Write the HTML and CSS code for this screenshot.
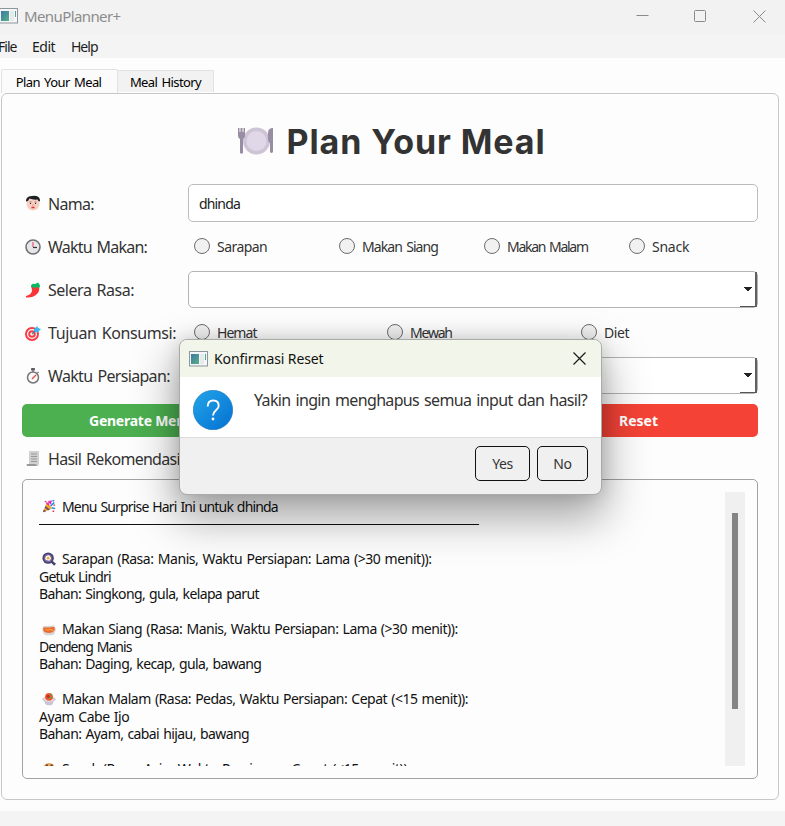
FILE: index.html
```html
<!DOCTYPE html>
<html lang="id">
<head>
<meta charset="utf-8">
<title>MenuPlanner+</title>
<link rel="stylesheet" href="styles.css">
</head>
<body>
<svg width="0" height="0" class="defs">
  <defs>
    <linearGradient id="teal" x1="0" y1="0" x2="1" y2="1"><stop offset="0" stop-color="#3b78a8"/><stop offset="1" stop-color="#58b184"/></linearGradient>
    <linearGradient id="blue" x1="0" y1="0" x2="1" y2="1"><stop offset="0" stop-color="#23a5e8"/><stop offset="1" stop-color="#0470d2"/></linearGradient>
    <symbol id="app" viewBox="0 0 19 16"><rect x=".5" y=".5" width="18" height="14.5" fill="#f4f6f8" stroke="#8d959d"/><rect x="2" y="3" width="8" height="10" fill="url(#teal)"/><rect x="11" y="3" width="4" height="10" fill="#e6eaef"/><path d="M16.500 3v6" stroke="#55a884"/></symbol>
  </defs>
</svg>
<div class="window">
  <header class="titlebar">
    <svg class="app-icon" width="19" height="16"><use href="#app"/></svg>
    <span class="app-name">MenuPlanner+</span>
    <svg class="controls" width="130" height="14" viewBox="0 0 130 14" fill="none" stroke="#8a8a8a"><path d="M.500 6.500h12"/><rect x="58.500" y="1.500" width="11" height="11" rx="1"/><path d="M117.500 1.500l12 12M129.500 1.500l-12 12"/></svg>
  </header>
  <nav class="menubar"><span class="m-file">File</span><span class="m-edit">Edit</span><span class="m-help">Help</span></nav>
  <div class="tabs"><div class="tab active">Plan Your Meal</div><div class="tab">Meal History</div></div>
  <main class="panel">
    <h1 class="title">
      <svg width="36" height="28" viewBox="0 0 36 28"><circle cx="18.500" cy="14" r="13.500" fill="#cdc4d6"/><circle cx="18.500" cy="14" r="10" fill="#e0d7e9"/><path d="M0 1h1.500v4h1V1h2v4h1V1H7v8q0 2-2 3v14q-1.500 1.500-3 0V12Q0 11 0 9z" fill="#998da3"/><path d="M35 1v24q-1.500 2-3 0v-9q-2-1-2-4V6q0-5 5-5z" fill="#998da3"/></svg>
      <span>Plan Your Meal</span>
    </h1>
    <div class="form">
      <div class="label"><svg class="ico" viewBox="0 0 16 16"><ellipse cx="8" cy="8.800" rx="6.500" ry="6.700" fill="#f6cfc0"/><path d="M1 6.500V5q1-4 6-4 7-1 8 4v1.500L13.500 6l-1-1.500Q8 5 4.500 3.500L3 6z" fill="#1d2023"/><path d="M4.500 7h2M9.500 7h2" stroke="#766" stroke-width=".8"/><path d="M5.500 8v1M10.500 8v1" stroke="#322" stroke-width="1"/><path d="M6.500 12.500h3" stroke="#e02a3c" stroke-width="1.500"/><path d="M8 9v2" stroke="#dda087"/></svg><span class="l1">Nama:</span></div>
      <div class="input">dhinda</div>
      <div class="label"><svg class="ico" viewBox="0 0 16 16"><circle cx="8" cy="8" r="7" fill="#e6e5e8" stroke="#716f73" stroke-width="1.600"/><path d="M8 3v5" stroke="#e57389" stroke-width="1.500"/><path d="M8 8.500h4" stroke="#333" stroke-width="1.200"/></svg><span class="l2">Waktu Makan:</span></div>
      <div class="radios four"><div class="radio r1"><i></i>Sarapan</div><div class="radio r2"><i></i>Makan Siang</div><div class="radio r3"><i></i>Makan Malam</div><div class="radio r4"><i></i>Snack</div></div>
      <div class="label"><svg class="ico" viewBox="0 0 16 16"><path d="M6 4q1-1 4-1l4 2q1 4-2 7-4 4-11 3.500v-1.500q5-1 6-5 0-2-1-5z" fill="#fa3437"/><path d="M6 5q0-4 4-3l2-1q2-1 2 1 2 2 0 4l-3-1-2 2-1-2z" fill="#08ba62"/></svg><span class="l3">Selera Rasa:</span></div>
      <div class="select"></div>
      <div class="label"><svg class="ico" viewBox="0 0 16 16"><circle cx="7" cy="9" r="6" fill="#fff" stroke="#f63c45" stroke-width="2"/><circle cx="7" cy="9" r="2.800" fill="#fff" stroke="#f63c45" stroke-width="2"/><path d="M7 9l6-6" stroke="#4c7f9c" stroke-width="1.400"/><path d="M9 4.500L12 1l1 2 3 1-3.500 3.500L10 7z" fill="#38b7f5"/></svg><span class="l4">Tujuan Konsumsi:</span></div>
      <div class="radios three"><div class="radio r5"><i></i>Hemat</div><div class="radio r6"><i></i>Mewah</div><div class="radio r7"><i></i>Diet</div></div>
      <div class="label"><svg class="ico" viewBox="0 0 16 16"><circle cx="8" cy="9.500" r="5.500" fill="#fafafa" stroke="#77757a" stroke-width="1.500"/><rect x="6" y="0" width="4" height="2.500" rx=".8" fill="#5e5b61"/><path d="M8 2v2M12.500 4l1 1" stroke="#77757a" stroke-width="1.500"/><path d="M7 11l4-4" stroke="#e84848" stroke-width="1.300"/></svg><span class="l5">Waktu Persiapan:</span></div>
      <div class="select"></div>
    </div>
    <div class="actions"><div class="btn green"><span>Generate Menu</span></div><div class="btn red"><span>Reset</span></div></div>
    <div class="label result-label"><svg class="ico" viewBox="0 0 16 16"><path d="M4 0h10v13q0 2-2 2H3q-2 0-1-2h2z" fill="#d0d0d0"/><path d="M6 3h6M6 5.500h6M6 8h6M6 10.500h6" stroke="#999"/><path d="M2 13h9q0 2 2 2H3q-2 0-1-2z" fill="#989898"/></svg><span class="l6">Hasil Rekomendasi</span></div>
    <section class="results">
      <div class="text">
        <div class="line t1"><svg class="em" viewBox="0 0 16 16"><path d="M1 15L5 5q5 1 6 6z" fill="#f4a82b"/><path d="M1 15l1-3 3 2M4 8l5 4-2 1-4-3z" fill="#724b70"/><path d="M5 4l3 3M8 2v3M11 2q-2 1-1 4" stroke="#d82fb4" stroke-width="1.700" fill="none"/><path d="M10 8l4-4M12 2h2M11 10l4 1" stroke="#198de1" stroke-width="1.700"/><path d="M3 3h2M13 7h2M12 14h2" stroke="#f03b58" stroke-width="1.700"/></svg><span>Menu Surprise Hari Ini untuk dhinda</span></div>
        <div class="line rule"></div>
        <div class="line"></div>
        <div class="line t2"><svg class="em" viewBox="0 0 16 16"><path d="M11 11l4 3.500" stroke="#4a4172" stroke-width="3"/><circle cx="7" cy="7" r="6.500" fill="#4a4172"/><circle cx="7" cy="7" r="4.500" fill="#766c9d"/><path d="M3.500 7q1-4 5-3l2 3-2 3-4-1z" fill="#fff"/><circle cx="7" cy="7" r="1.700" fill="#f9a931"/></svg><span>Sarapan (Rasa: Manis, Waktu Persiapan: Lama (&gt;30 menit)):</span></div>
        <div class="line t3">Getuk Lindri</div>
        <div class="line t4">Bahan: Singkong, gula, kelapa parut</div>
        <div class="line"></div>
        <div class="line t5"><svg class="em" viewBox="0 0 16 16"><path d="M0 7h16q-1 8-5 8H5Q1 15 0 7z" fill="#d8d5d8"/><path d="M1.500 5.500h13v4q-2 3-6 3-6 0-7-3z" fill="#ed6b28"/><path d="M4 8.500l3 1 2-1 4 1" stroke="#f9b36b" fill="none"/><path d="M2 5.500h7l5-1" stroke="#cfcfcf" stroke-width="1.500" fill="none"/></svg><span>Makan Siang (Rasa: Manis, Waktu Persiapan: Lama (&gt;30 menit)):</span></div>
        <div class="line t6">Dendeng Manis</div>
        <div class="line t7">Bahan: Daging, kecap, gula, bawang</div>
        <div class="line"></div>
        <div class="line t8"><svg class="em" viewBox="0 0 16 16"><path d="M0 8l4-3h8l4 3-3 3q-1 4-3 4H6q-3-1-3-4z" fill="#cbc3d7"/><path d="M2 8q3-2 12 0-2 3-6 3T2 8z" fill="#f1e6ee"/><circle cx="8" cy="5.500" r="4.500" fill="#f15b2a"/><circle cx="7" cy="5" r="1.800" fill="#ba3026"/><path d="M8 7l3-1M9 3h2" stroke="#38aa56" stroke-width="1.500"/></svg><span>Makan Malam (Rasa: Pedas, Waktu Persiapan: Cepat (&lt;15 menit)):</span></div>
        <div class="line t9">Ayam Cabe Ijo</div>
        <div class="line t10">Bahan: Ayam, cabai hijau, bawang</div>
        <div class="line"></div>
        <div class="line t11"><svg class="em" viewBox="0 0 16 16"><circle cx="8" cy="8" r="7" fill="#e9a45c"/><circle cx="5.500" cy="4" r="1.300" fill="#67402c"/><circle cx="11" cy="4" r="1.400" fill="#67402c"/><circle cx="8" cy="10" r="1.500" fill="#67402c"/></svg><span>Snack (Rasa: Asin, Waktu Persiapan: Cepat (&lt;15 menit)):</span></div>
      </div>
      <div class="scrollbar"><div class="thumb"></div></div>
    </section>
  </main>
  <footer class="statusbar"></footer>
  <div class="dialog">
    <div class="dlg-head"><svg width="19" height="16"><use href="#app"/></svg><span class="dlg-title">Konfirmasi Reset</span><svg class="dlg-close" width="13" height="13" viewBox="0 0 13 13" stroke="#1a1a1a" stroke-width="1.200"><path d="M.500 .500l12 12M12.500 .500l-12 12"/></svg></div>
    <div class="dlg-body"><svg width="40" height="40" viewBox="0 0 40 40"><circle cx="20" cy="20" r="19.700" fill="url(#blue)" stroke="#1474bd" stroke-width=".6"/><path d="M14.700 16.500q0-6 5.500-6t5.500 5.200c0 4.800-5.700 4.500-5.700 9.800" fill="none" stroke="#fff" stroke-width="1.900"/><circle cx="20" cy="29" r="1.400" fill="#fff"/></svg><span class="dlg-msg">Yakin ingin menghapus semua input dan hasil?</span></div>
    <div class="dlg-foot"><div class="dlg-btn yes">Yes</div><div class="dlg-btn no">No</div></div>
  </div>
</div>
</body>
</html>
```
FILE: styles.css
```css
* { box-sizing: border-box; }
body { margin: 0; font-family: "Noto Sans", "Open Sans", sans-serif; font-size: 14px; color: #333; }
.defs { position: absolute; }
svg { flex: none; display: block; }
span, .line, .tab, .radio { white-space: nowrap; }
.window { position: relative; width: 785px; height: 826px; overflow: hidden; background: #fdfdfd; display: flex; flex-direction: column; }
.titlebar { height: 34px; flex: none; background: #f2f2f2; display: flex; align-items: center; padding-right: 19px; }
.app-icon { margin-left: -1px; margin-top: -2px; }
.app-name { margin-left: 6px; margin-top: -2px; font-size: 15px; color: #8c8c8c; letter-spacing: -0.6px; }
.controls { margin-left: auto; margin-top: -3px; }
.menubar { height: 24px; flex: none; background: #f4f4f4; display: flex; align-items: center; color: #1d1d1d; letter-spacing: -1px; }
.m-file { margin-left: -2px; width: 34px; }
.m-edit { width: 39px; letter-spacing: -0.5px; }
.tabs { height: 35px; flex: none; display: flex; align-items: flex-end; padding: 0 0 0 1px; color: #000; font-size: 13px; }
.tab { height: 22px; width: 96px; margin-bottom: 1px; border: 1px solid #e2e2e2; border-left: 0; border-bottom: 0; background: #f2f2f2; display: flex; align-items: center; justify-content: center; letter-spacing: -0.6px; word-spacing: 1.5px; }
.tab.active { height: 24px; width: 117px; margin-bottom: 0; border-left: 1px solid #e2e2e2; background: #fbfbfb; border-radius: 2px 2px 0 0; padding-right: 2px; }
.panel { width: 778px; height: 707px; flex: none; margin-left: 1px; border: 1px solid #c8c8c8; border-radius: 6px; padding: 20px; }
.title { margin: 0; height: 54px; display: flex; justify-content: center; align-items: center; gap: 12px; padding-left: 4px; font: 700 34px "Inter", sans-serif; color: #333; letter-spacing: 0.9px; }
.form { margin-top: 16px; display: grid; grid-template-columns: 166px 570px; grid-template-rows: 38px repeat(4, 37px); row-gap: 6px; }
.label { display: flex; align-items: center; gap: 7px; padding-left: 3px; font-size: 16px; word-spacing: 1.5px; }
.l1 { letter-spacing: -0.7px; padding-top: 1px; }
.l2 { letter-spacing: -0.8px; }
.l3 { letter-spacing: -0.47px; }
.l4 { letter-spacing: -0.4px; }
.l5 { letter-spacing: -0.67px; }
.l6 { letter-spacing: -0.72px; }
.ico { width: 16px; height: 16px; }
.input { border: 1px solid #bcbcbc; border-radius: 5px; background: #fff; display: flex; align-items: center; padding: 0 10px; color: #1b1b1b; letter-spacing: -0.85px; }
.select { border: 1px solid #b4b4b4; border-radius: 5px; background: #fff; display: flex; justify-content: flex-end; }
.select::before { content: ""; width: 15px; border-right: 2px solid #606060; border-bottom: 1px solid #555; background: linear-gradient(#222, #222) 4px 15px / 8px 1px no-repeat, linear-gradient(#222, #222) 5px 16px / 6px 1px no-repeat, linear-gradient(#222, #222) 6px 17px / 4px 1px no-repeat, linear-gradient(#222, #222) 7px 18px / 2px 1px no-repeat; }
.radios { display: grid; padding-left: 6px; align-items: center; }
.four { grid-template-columns: repeat(4, 145px); }
.three { grid-template-columns: 193px 194px 193px; }
.radio { display: flex; align-items: center; gap: 7px; word-spacing: 1.5px; }
.radio i { width: 16px; height: 16px; margin-top: -2px; border: 1px solid #6c6c6c; border-radius: 50%; background: #f1f1f1; }
.r1 { letter-spacing: -0.55px; }
.r2 { letter-spacing: -0.92px; }
.r3 { letter-spacing: -1.28px; }
.r4 { letter-spacing: -0.25px; }
.r5 { letter-spacing: -0.95px; }
.r6 { letter-spacing: -1.2px; }
.r7 { letter-spacing: -0.4px; }
.actions { margin-top: 10px; display: grid; grid-template-columns: 366px 364px; gap: 6px; height: 33px; }
.btn { border-radius: 5px; display: flex; align-items: center; color: #fff; font-weight: 700; }
.green { background: #4caf50; padding-left: 67px; letter-spacing: -0.25px; }
.red { background: #f44336; padding-left: 225px; }
.result-label { height: 42px; padding-top: 2px; }
.results { height: 300px; border: 1px solid #a2a2a2; border-radius: 5px; padding: 12px; display: flex; justify-content: space-between; }
.text { height: 274px; overflow: hidden; padding: 5.5px 0 0 4px; color: #111; }
.line { height: 17.5px; display: flex; align-items: center; line-height: 17.5px; word-spacing: 1px; }
.t1 { height: 17px; line-height: 17px; letter-spacing: -0.83px; }
.t2 { letter-spacing: -0.44px; }
.t3 { letter-spacing: -0.81px; }
.t4 { letter-spacing: -0.62px; }
.t5 { letter-spacing: -0.5px; }
.t6 { letter-spacing: -0.94px; }
.t7 { letter-spacing: -0.61px; }
.t8 { letter-spacing: -0.5px; }
.t9 { letter-spacing: -0.47px; }
.t10 { letter-spacing: -0.58px; }
.t11 { letter-spacing: -0.38px; }
.em { width: 14px; height: 14px; margin: 0 6px 0 3px; }
.rule { width: 440px; height: 18px; align-items: flex-start; }
.rule::before { content: ""; height: 1px; width: 440px; margin-top: 9px; background: #111; }
.scrollbar { width: 20px; height: 274px; background: #f0f0f0; padding-top: 21px; }
.thumb { width: 6px; height: 196px; margin-left: 7px; background: #858585; }
.statusbar { margin-top: 11px; flex: 1; background: #f4f4f4; }
.dialog { position: absolute; left: 179px; top: 339px; width: 423px; height: 156px; border: 1px solid #a9aba8; border-radius: 8px; overflow: hidden; background: #f0f0f0; box-shadow: 0 20px 44px 4px rgba(0, 0, 0, .34), 0 0 18px rgba(0, 0, 0, .14); }
.dlg-head { height: 37px; background: #f2f5e9; display: flex; align-items: center; padding: 0 15px 0 9px; color: #111; }
.dlg-title { margin-left: 6px; letter-spacing: -0.1px; }
.dlg-close { margin-left: auto; }
.dlg-body { height: 61px; background: #fff; border-bottom: 1px solid #dcdcdc; display: flex; padding: 13px 0 0 13px; }
.dlg-msg { margin-left: 21px; line-height: 21px; font-size: 16px; letter-spacing: -0.66px; word-spacing: 1.5px; }
.dlg-foot { padding: 8px 13px; display: flex; justify-content: flex-end; gap: 7px; }
.dlg-btn { height: 35px; width: 51px; border: 1px solid #111; border-radius: 5px; display: flex; align-items: center; justify-content: center; letter-spacing: -0.4px; }
.yes { width: 55px; }
```
